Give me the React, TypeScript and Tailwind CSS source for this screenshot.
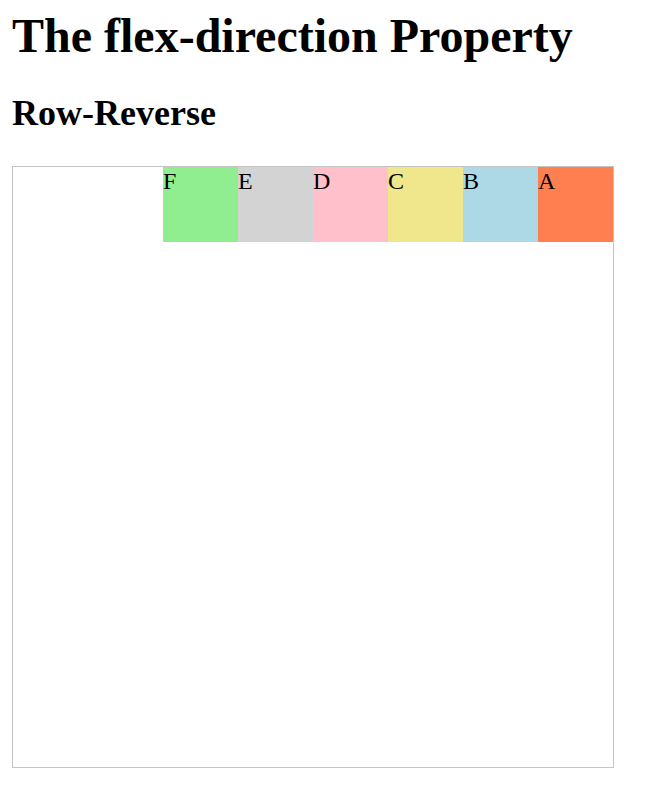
import React from 'react';

const items = [
  { label: 'A', color: 'bg-[#ff7f50]' },
  { label: 'B', color: 'bg-[#add8e6]' },
  { label: 'C', color: 'bg-[#f0e68c]' },
  { label: 'D', color: 'bg-[#ffc0cb]' },
  { label: 'E', color: 'bg-[#d3d3d3]' },
  { label: 'F', color: 'bg-[#90ee90]' },
];

const App: React.FC = () => {
  return (
    <div className="min-h-[810px] bg-white px-[12px] text-black font-['Liberation_Serif','Times_New_Roman',serif]">
      <h1 className="pt-[8px] text-[48px] font-bold leading-[55px]">The flex-direction Property</h1>
      <h2 className="mt-[30px] text-[36px] font-bold leading-[41px]">Row-Reverse</h2>
      <div className="mt-[32px] flex h-[602px] w-[602px] flex-row-reverse border border-[#c4c4c4]">
        {items.map((item) => (
          <div key={item.label} className={`h-[75px] w-[75px] text-[24px] leading-[28px] ${item.color}`}>
            {item.label}
          </div>
        ))}
      </div>
    </div>
  );
};

export default App;
